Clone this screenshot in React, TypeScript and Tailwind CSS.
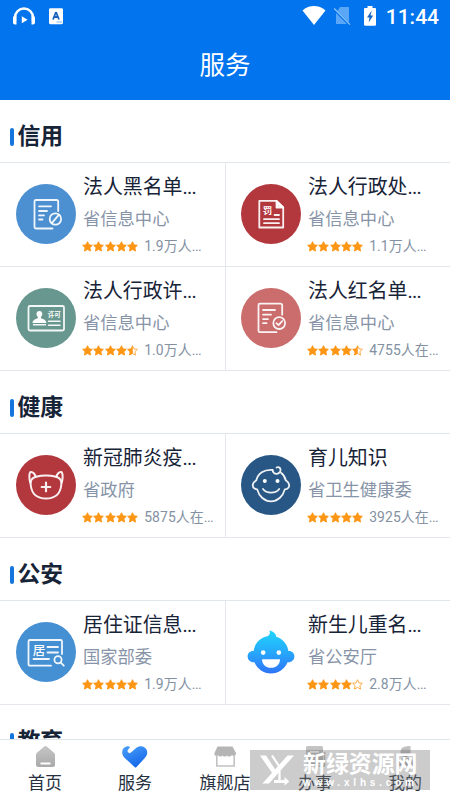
import type { ReactNode } from 'react';

const STAR = 'M6 .8 7.6 4.2l3.7.5-2.7 2.6.7 3.7L6 9.2 2.7 11l.7-3.7L.7 4.7l3.7-.5z';

function Star({ fill }: { fill: number }) {
  return (
    <svg className="h-[11px] w-[11px] shrink-0" viewBox="0 0 12 12" fill="none">
      {fill < 1 && <path d={STAR} stroke="#fb9a1f" strokeWidth=".9" strokeLinejoin="round" />}
      {fill === 1 && <path d={STAR} fill="#fd9614" stroke="#fd9614" strokeWidth="1" strokeLinejoin="round" />}
      {fill === 0.5 && <path d="M6.300 .6V9.400L2.500 11.200l.7-3.700L.5 4.600l3.900-.5z" fill="#fd9614" />}
    </svg>
  );
}

function Disc({ className, children }: { className: string; children: ReactNode }) {
  return (
    <div className={`h-[60px] w-[60px] shrink-0 overflow-hidden rounded-full ${className}`}>
      <svg className="h-full w-full" viewBox="0 0 60 60" fill="none" stroke="#fff" strokeOpacity=".92" strokeWidth="1.8" strokeLinecap="round" strokeLinejoin="round">
        {children}
      </svg>
    </div>
  );
}

const glyph = { fontFamily: '"Noto Sans CJK SC", sans-serif', fontWeight: 700, fill: '#fff', stroke: 'none' };

const docLines = (
  <>
    <path d="M42.200 27V17.500a1.500 1.500 0 0 0-1.500-1.500H20a1.500 1.500 0 0 0-1.500 1.500v25.500a1.500 1.500 0 0 0 1.500 1.500h16.500" />
    <path d="M23 22.300h12M23 27h8M23 31.400h5M23 35.500h3.500" />
  </>
);

const blacklist = (
  <Disc className="bg-[#4c90d1]">
    {docLines}
    <circle cx="39.400" cy="35" r="5.700" />
    <path d="m36 38.800 6.600-7.600" />
  </Disc>
);

const redlist = (
  <Disc className="bg-[#cb6c6d]">
    <g transform="translate(-1 -.3)">
      {docLines}
      <circle cx="39.200" cy="35.400" r="5.900" />
      <path d="m36.400 35.500 2.100 2 3.700-4" />
    </g>
  </Disc>
);

const penalty = (
  <Disc className="bg-[#b2383d]">
    <path d="M18.300 16.800h17.200l6.700 6.700v20H18.300z" />
    <path d="M35.500 16.800v6.700h6.700z" fill="#fff" fillOpacity=".9" />
    <path d="M33.500 31h4.500M23 35.200h15M23 39.200h15" />
    <text x="21.700" y="30" fontSize="9.500" style={glyph}>罚</text>
  </Disc>
);

const permit = (
  <Disc className="bg-[#67978e]">
    <rect x="12.500" y="18" width="35.500" height="24.500" rx="1.500" />
    <circle cx="23.400" cy="26" r="2.900" fill="#fff" stroke="none" />
    <path d="M16.500 35c0-2.800 3-4 5.300-4.700v-2h3.200v2c2.300.7 5.400 1.900 5.400 4.700z" fill="#fff" stroke="none" />
    <path d="M17.500 36.700h12M32.500 33.200H44M32.500 37.200H44" strokeWidth="1.500" />
    <text x="31.700" y="29.300" fontSize="6.500" style={glyph}>许可</text>
  </Disc>
);

const mask = (
  <Disc className="bg-[#b2383d]">
    <g strokeWidth="2">
      <path d="M20 21.800c6.500-1.700 13.500-1.700 20 0 4.400 1 6 3.700 5.300 8.200C44.300 39 38.500 43.500 30 43.500S15.700 39 14.700 30c-.7-4.500.9-7.200 5.300-8.200z" />
      <path d="M14.300 27.500c-1.200-3-1.500-9.800.5-10.500 2-.6 4.200 2.400 4.900 4.700M45.700 27.500c1.200-3 1.500-9.800-.5-10.500-2-.6-4.200 2.400-4.900 4.700" />
      <path d="M30 27.700v8.600M25.700 32h8.600" strokeWidth="2.200" />
    </g>
  </Disc>
);

const baby = (
  <Disc className="bg-[#285785]">
    <path d="M31.500 14.900c-8.500-.6-14.700 3.600-16.200 10.400-3.800 2.500-4.800 6-1.700 8.300.9.600 1.800.8 2.600.8C18 41.500 23.500 46.300 30 46.300S42 41.500 43.800 34.400c3.200-.1 4.900-2.500 4.200-5.200-.5-1.700-1.800-3-3.300-3.900-.7-3.300-2.300-5.800-4.700-7.500" />
    <path d="M31.500 14.900c.2 2.400 2 4.100 4.300 3.900 2.300-.2 4-2.200 3.700-4.300-.3-2-2.300-2.900-3.900-2" />
    <circle cx="23.800" cy="26" r="2" fill="#fff" stroke="none" />
    <circle cx="36.500" cy="26" r="2" fill="#fff" stroke="none" />
    <path d="M22 34c3.500 4.800 12.700 4.800 16.200 0" />
  </Disc>
);

const residence = (
  <Disc className="bg-[#4590d3]">
    <path d="M46 32V19.500a1.500 1.500 0 0 0-1.500-1.500H14a1.500 1.500 0 0 0-1.500 1.500v22.700a1.500 1.500 0 0 0 1.500 1.500h21" />
    <path d="M31.500 25H42M31.500 30.500H42M17.500 37H33" />
    <circle cx="42" cy="37.800" r="3.600" />
    <path d="m44.800 40.700 3 3" />
    <text x="16.700" y="33" fontSize="12.500" style={{ ...glyph, fontWeight: 500 }}>居</text>
  </Disc>
);

const newborn = (
  <div className="h-[60px] w-[60px] shrink-0">
    <svg className="h-full w-full" viewBox="0 0 60 60">
      <defs>
        <linearGradient id="newborn" x1="0" y1="9" x2="0" y2="51" gradientUnits="userSpaceOnUse">
          <stop stopColor="#1fd5fb" />
          <stop offset=".5" stopColor="#27a9fc" />
          <stop offset="1" stopColor="#2f75f8" />
        </linearGradient>
      </defs>
      <path d="M28.300 8.500c3.500.6 7.200 3.300 6.800 6.200 6.500 1.700 11.300 7.300 12.300 14.300 3.300-.4 6 2 6 5.200 0 3.800-3 6.400-6.800 6C43.500 47 37.500 51.500 30 51.500s-13.500-4.500-16.600-11.300c-3.800.4-6.800-2.200-6.800-6 0-3.200 2.700-5.600 6-5.200 1.100-7.600 6.500-13.400 14-14.700 2-1 3-3 1.700-5.800z" fill="url(#newborn)" />
      <circle cx="22.200" cy="30.600" r="2.300" fill="#fff" />
      <circle cx="37.800" cy="30.600" r="2.300" fill="#fff" />
      <path d="M21 37.200h18c0 5-3.800 8.600-9 8.600s-9-3.600-9-8.600z" fill="#fff" />
    </svg>
  </div>
);

type Service = { icon: ReactNode; title: string; org: string; stars: number; users: string };

const sections: { name: string; items: Service[] }[] = [
  {
    name: '信用',
    items: [
      { icon: blacklist, title: '法人黑名单...', org: '省信息中心', stars: 5, users: '1.9万人...' },
      { icon: penalty, title: '法人行政处...', org: '省信息中心', stars: 5, users: '1.1万人...' },
      { icon: permit, title: '法人行政许...', org: '省信息中心', stars: 4.5, users: '1.0万人...' },
      { icon: redlist, title: '法人红名单...', org: '省信息中心', stars: 4.5, users: '4755人在...' },
    ],
  },
  {
    name: '健康',
    items: [
      { icon: mask, title: '新冠肺炎疫...', org: '省政府', stars: 5, users: '5875人在...' },
      { icon: baby, title: '育儿知识', org: '省卫生健康委', stars: 5, users: '3925人在...' },
    ],
  },
  {
    name: '公安',
    items: [
      { icon: residence, title: '居住证信息...', org: '国家部委', stars: 5, users: '1.9万人...' },
      { icon: newborn, title: '新生儿重名...', org: '省公安厅', stars: 4, users: '2.8万人...' },
    ],
  },
  { name: '教育', items: [] },
];

function Ellipsized({ text, dots }: { text: string; dots: string }) {
  const cut = text.endsWith('...');
  return (
    <>
      {cut ? text.slice(0, -3) : text}
      {cut && <span className={dots}>...</span>}
    </>
  );
}

function ServiceCell({ item }: { item: Service }) {
  return (
    <div className="flex h-[104px] border-b border-[#e4e8ec] pl-4 even:border-l even:pl-[15px]">
      <div className="mr-[7px] flex items-center pb-[2px]">{item.icon}</div>
      <div className="min-w-0 pt-[9px] whitespace-nowrap">
        <div className="h-8 text-[19.900px] leading-8 text-[#172337]">
          <Ellipsized text={item.title} dots="tracking-[-0.700px]" />
        </div>
        <div className="h-[30px] text-[17.300px] leading-[30px] text-[#8794a7]">{item.org}</div>
        <div className="flex h-[25px] items-center">
          <div className="-ml-px flex gap-[0.300px]">
            {[0, 1, 2, 3, 4].map((i) => (
              <Star key={i} fill={Math.max(0, Math.min(1, item.stars - i))} />
            ))}
          </div>
          <span className="ml-[6px] text-[13.900px] tracking-[0.100px] text-[#8491a3]">
            <Ellipsized text={item.users} dots="tracking-[-0.500px]" />
          </span>
        </div>
      </div>
    </div>
  );
}

const tabs: { label: string; icon: ReactNode }[] = [
  {
    label: '首页',
    icon: <path fillRule="evenodd" d="M12.200 2.500a2 2 0 0 1 2.600 0l7.200 6.300c.7.600 1 1.200 1 2v10c0 1.400-.9 2.200-2.200 2.200H6.200C4.900 23 4 22.200 4 20.800v-10c0-.8.300-1.400 1-2zM8.500 18.500v2h10v-2z" fill="url(#tabGray)" />,
  },
  {
    label: '服务',
    icon: <path d="M12.800 23.200 2.500 13.700C-1.500 9.500 0 3.500 4.500 2.500c1.700-.4 2.800-.1 3.700.4L6 5.800c-1.500 2 .9 4.300 2.900 2.700l5.200-4.600c4-3.200 9.500-1.700 10.800 2.600.9 3-.2 5.500-2.100 7.500l-8.500 9.200c-.5.500-1 .5-1.500 0z" fill="url(#tabBlue)" />,
  },
  {
    label: '旗舰店',
    icon: (
      <>
        <path d="M5.500 2.500h15L24 9c.6 2-2 4-4 2.300-1.800 1.700-3.800 1.700-5 .1-1.300 1.600-3.300 1.600-4.500 0C9 13 7.200 13 6 11.300 4 13 1.700 11 2.500 9z" fill="#b6b5b5" />
        <path d="M4.800 11v11h17.400V11" fill="none" stroke="#c3c2c2" strokeWidth="1.600" />
      </>
    ),
  },
  {
    label: '办事',
    icon: (
      <>
        <path fillRule="evenodd" d="M5.500 2h14A1.500 1.500 0 0 1 21 3.500V20H6.500A2.500 2.500 0 0 1 4 17.500v-14A1.500 1.500 0 0 1 5.500 2zM8 7v1.700h9V7zm0 4v1.700h6V11z" fill="url(#tabGray)" />
        <path d="M22.500 8v14H9" fill="none" stroke="#b7b7b7" strokeWidth="1.700" />
      </>
    ),
  },
  {
    label: '我的',
    icon: (
      <>
        <path d="M8.500 8C8.500 4 11.500 2 18.500 2v5.500c0 3.300-2 5.500-5 5.500s-5-2-5-5z" fill="url(#tabGray)" />
        <path d="M5 22c0-5 3-8 8-8h2c5 0 8 3 8 8z" fill="url(#tabGray)" />
      </>
    ),
  },
];

function StatusBar() {
  return (
    <div className="flex h-8 items-center pl-3 pr-[11px] text-white">
      <svg className="h-8 w-6" viewBox="0 0 24 32" fill="none">
        <path d="M3 21v-3.500a9 9 0 0 1 18 0V21" stroke="#fff" strokeWidth="2.400" />
        <path d="M1 18.500c0-2 1-3.500 3.500-3.500v9.500H3c-1.200 0-2-.8-2-2zM23 18.500c0-2-1-3.500-3.500-3.500v9.500H21c1.200 0 2-.8 2-2zM9.800 16.300l5.800 3.500-5.800 3.500z" fill="#fff" />
      </svg>
      <svg className="ml-[12px] h-8 w-4" viewBox="0 0 16 32">
        <rect x="1" y="8.200" width="14" height="16" rx="1.400" fill="#fff" />
        <path d="M8 12 5 19.500M8 12l3 7.500M6 17h4" stroke="#1663bf" strokeWidth="1.800" fill="none" />
        <path d="M8.500 22H14" stroke="#79b5f4" strokeWidth="1" />
      </svg>
      <svg className="ml-auto h-8 w-[24px]" viewBox="0 0 24 32">
        <path d="M.5 10.500C7 4.600 17 4.600 23.500 10.500L12 25z" fill="#fff" />
      </svg>
      <svg className="ml-[7px] h-8 w-[18px]" viewBox="0 0 18 32">
        <path d="M7 7h9v15.500L4.500 11zM3 13l11 11H3z" fill="#59a7f6" />
        <path d="M1.200 8.500 17 24.700" stroke="#8dc4fc" strokeWidth="1.200" />
      </svg>
      <svg className="ml-[12px] h-8 w-[14px]" viewBox="0 0 14 32">
        <path d="M4.500 6h5v2H12a1 1 0 0 1 1 1v15.500a1.300 1.300 0 0 1-1.300 1.300H2.300A1.300 1.300 0 0 1 1 24.500V9a1 1 0 0 1 1-1h2.500z" fill="#fff" />
        <path d="M8.700 10.500 4 17.500h2.500l-.8 5 4.500-7H7.500z" fill="#1264c0" />
      </svg>
      <span className="ml-[9px] pt-px text-[21px] font-medium leading-8">11:44</span>
    </div>
  );
}

export default function App() {
  return (
    <div className="relative flex h-[800px] w-[450px] flex-col overflow-hidden bg-white font-['Roboto','Noto_Sans_CJK_SC',sans-serif]" lang="zh-CN">
      <header className="h-[100px] shrink-0 bg-[#0274ed]">
        <StatusBar />
        <h1 className="h-[66px] text-center text-[25.500px] leading-[66px] font-normal text-white">服务</h1>
      </header>

      <main className="min-h-0 flex-1 overflow-hidden">
        {sections.map((s) => (
          <section key={s.name}>
            <div className="flex h-[62px] items-center gap-[4px] pt-[12px] pl-[10px]">
              <span className="h-[18px] w-[3.500px] rounded-full bg-[#1476dd]" />
              <h2 className="text-[22.800px] leading-8 font-bold text-[#172337]">{s.name}</h2>
            </div>
            {s.items.length > 0 && (
              <div className="grid grid-cols-2 border-t border-[#e0e6ea]">
                {s.items.map((item) => (
                  <ServiceCell key={item.title} item={item} />
                ))}
              </div>
            )}
          </section>
        ))}
      </main>

      <nav className="grid h-[61px] shrink-0 grid-cols-5 border-t border-[#dfe6ea] bg-white">
        <svg className="absolute h-0 w-0">
          <defs>
            <linearGradient id="tabGray" x1="0" y1="0" x2="0" y2="1">
              <stop stopColor="#c7c6c6" />
              <stop offset="1" stopColor="#aaa9a9" />
            </linearGradient>
            <linearGradient id="tabBlue" x1="0" y1="0" x2="0.500" y2="1">
              <stop stopColor="#4aa0fa" />
              <stop offset="1" stopColor="#1668e9" />
            </linearGradient>
          </defs>
        </svg>
        {tabs.map((t) => (
          <div key={t.label} className="flex flex-col items-center pt-[4px]">
            <svg className="h-[25px] w-[27px]" viewBox="0 0 27 25">{t.icon}</svg>
            <span className="text-[17px] leading-[28px] whitespace-nowrap text-[#26313f]">{t.label}</span>
          </div>
        ))}
      </nav>

      <div className="absolute top-[750px] left-[250px] flex h-10 w-[180px] items-center bg-[#808080]/40 text-white">
        <svg className="ml-[10px] h-[32px] w-[34px] shrink-0" viewBox="0 0 34 32" fill="none" stroke="#fff">
          <path d="M0 1.500h6l10.500 16-3 3.500z" fill="#fff" stroke="none" />
          <path d="M27.500 1.500H34L9 29.500H2.500z" fill="#fff" stroke="none" />
          <path d="M12 1.500 20 13.500M19.500 17v9" strokeWidth="2.200" />
          <path d="M14 27.500h12" strokeWidth="2.800" />
          <path d="m24.500 23 4.800 4.500-4.800 4z" fill="#fff" stroke="none" />
        </svg>
        <div className="ml-[9px] pt-[3px] whitespace-nowrap">
          <div className="h-[22px] text-[22.900px] leading-[22px] font-bold">新绿资源网</div>
          <div className="h-[14px] font-['Liberation_Sans',sans-serif] text-[10px] leading-[13px] font-bold tracking-[3.800px]">www.xlhs.com</div>
        </div>
      </div>
    </div>
  );
}
